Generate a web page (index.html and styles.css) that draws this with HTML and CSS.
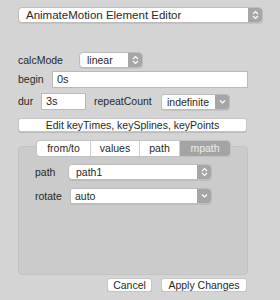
FILE: index.html
```html
<!DOCTYPE html>
<html>
<head>
    <meta charset="utf-8">
    <title>AnimateMotion Element Editor</title>
    <link rel="stylesheet" href="styles.css">
</head>
<body>
    <div class="editor">
        <div class="select select-top">
            <span class="select-text">AnimateMotion Element Editor</span>
            <span class="select-arrow"><svg width="7" height="10" viewBox="0 0 7 10"><path d="M1 4 L3.5 1.5 L6 4 M1 6 L3.5 8.5 L6 6" fill="none" stroke="#fff" stroke-width="1.2"/></svg></span>
        </div>

        <div class="row row-calc">
            <span class="label">calcMode</span>
            <div class="select select-calc">
                <span class="select-text">linear</span>
                <span class="select-arrow"><svg width="7" height="10" viewBox="0 0 7 10"><path d="M1 4 L3.5 1.5 L6 4 M1 6 L3.5 8.5 L6 6" fill="none" stroke="#fff" stroke-width="1.2"/></svg></span>
            </div>
        </div>

        <div class="row row-begin">
            <span class="label">begin</span>
            <div class="textbox textbox-begin">0s</div>
        </div>

        <div class="row row-dur">
            <span class="label">dur</span>
            <div class="textbox textbox-dur">3s</div>
            <span class="label label-repeat">repeatCount</span>
            <div class="select select-repeat">
                <span class="select-text">indefinite</span>
                <span class="select-arrow"><svg width="7" height="6" viewBox="0 0 7 6"><path d="M1 1.5 L3.5 4 L6 1.5" fill="none" stroke="#fff" stroke-width="1.2"/></svg></span>
            </div>
        </div>

        <div class="button button-wide">Edit keyTimes, keySplines, keyPoints</div>

        <div class="tabbox">
            <div class="tabs">
                <span class="tab tab-fromto">from/to</span>
                <span class="tab tab-values">values</span>
                <span class="tab tab-path">path</span>
                <span class="tab tab-mpath selected">mpath</span>
            </div>
            <div class="panel">
                <div class="row row-path">
                    <span class="label label-inner">path</span>
                    <div class="select select-path">
                        <span class="select-text">path1</span>
                        <span class="select-arrow"><svg width="7" height="10" viewBox="0 0 7 10"><path d="M1 4 L3.5 1.5 L6 4 M1 6 L3.5 8.5 L6 6" fill="none" stroke="#fff" stroke-width="1.2"/></svg></span>
                    </div>
                </div>
                <div class="row row-rotate">
                    <span class="label label-inner">rotate</span>
                    <div class="select select-rotate">
                        <span class="select-text select-text-square">auto</span>
                        <span class="select-arrow"><svg width="7" height="6" viewBox="0 0 7 6"><path d="M1 1.5 L3.5 4 L6 1.5" fill="none" stroke="#fff" stroke-width="1.2"/></svg></span>
                    </div>
                </div>
            </div>
        </div>

        <div class="footer">
            <div class="button button-cancel">Cancel</div>
            <div class="button button-apply">Apply Changes</div>
        </div>
    </div>
</body>
</html>
```

FILE: styles.css
```css
html, body {
	margin: 0;
	padding: 0;
	background: #d4d4d4;
}
body {
	font: normal 10.5px/1 "Liberation Sans", Arial, sans-serif;
	color: #282828;
}
.editor {
	width: 245px;
	padding: 7px 0 0 18px;
	display: flex;
	flex-direction: column;
}

/* selects */
.select {
	display: flex;
	height: 16px;
	box-sizing: border-box;
	border: 1px solid #bcbcbc;
	border-radius: 4px;
	background: #fff;
	box-shadow: 0 1px 0 rgba(0,0,0,0.08);
	overflow: hidden;
}
.select-text {
	flex: 1;
	padding-left: 7px;
	line-height: 14px;
	white-space: nowrap;
	overflow: hidden;
}
.select-arrow {
	width: 14px;
	background: #a6a6a6;
	display: flex;
	align-items: center;
	justify-content: center;
}
.select-top {
	width: 245px;
	font-size: 11.5px;
}
.select-calc {
	width: 64px;
}
.select-repeat {
	width: 69px;
	border-radius: 3px;
}
.select-repeat .select-text {
	padding-left: 5px;
}
.select-path {
	width: 144px;
}
.select-rotate {
	width: 142px;
	border-radius: 2px 4px 4px 2px;
}
.select-text-square {
	padding-left: 4px;
}

/* rows */
.row {
	display: flex;
	align-items: center;
}
.label {
	white-space: nowrap;
}
.row-calc {
	margin-top: 29px;
}
.row-calc .label {
	width: 61px;
}
.row-begin {
	margin-top: 3px;
}
.row-begin .label {
	width: 34px;
}
.row-dur {
	margin-top: 5px;
}
.row-dur .label {
	width: 23px;
}
.label-repeat {
	margin-left: 8px;
	width: 61px !important;
	margin-right: 6px;
}

/* text boxes */
.textbox {
	height: 17px;
	box-sizing: border-box;
	border: 1px solid #b9b9b9;
	background: #fff;
	line-height: 15px;
	padding-left: 4px;
	font-size: 11px;
}
.textbox-begin {
	width: 196px;
}
.textbox-dur {
	width: 45px;
}

/* buttons */
.button {
	height: 14px;
	box-sizing: border-box;
	border: 1px solid #c6c6c6;
	border-radius: 3px;
	background: #fff;
	box-shadow: 0 1px 0 rgba(0,0,0,0.12);
	text-align: center;
	line-height: 12px;
	white-space: nowrap;
}
.button-wide {
	width: 229px;
	margin-top: 8px;
}

/* tabs */
.tabbox {
	margin-top: 9px;
	position: relative;
	width: 230px;
}
.tabs {
	position: absolute;
	top: 0;
	left: 19px;
	display: flex;
	height: 15px;
	border-radius: 3px;
	box-shadow: 0 0 0 1px #c2c2c2, 0 1px 1px rgba(0,0,0,0.15);
	overflow: hidden;
	background: #fff;
	z-index: 1;
}
.tab {
	display: flex;
	align-items: center;
	justify-content: center;
	border-right: 1px solid #d0d0d0;
}
.tab-fromto {
	width: 53px;
}
.tab-values {
	width: 48px;
}
.tab-path {
	width: 39px;
}
.tab-mpath {
	width: 50px;
	border-right: none;
}
.tab.selected {
	background: #a4a4a4;
	color: #ececec;
}
.panel {
	margin-top: 5px;
	height: 129px;
	box-sizing: border-box;
	background: #cbcbcb;
	border: 1px solid #c3c3c3;
	border-radius: 4px;
	padding: 17px 0 0 16px;
}
.label-inner {
	width: 33px;
}
.row-rotate {
	margin-top: 8px;
}
.row-rotate .label-inner {
	width: 35px;
}

/* footer */
.footer {
	display: flex;
	margin-top: 3px;
	padding-left: 89px;
}
.button-cancel {
	width: 45px;
}
.button-apply {
	width: 86px;
	margin-left: 9px;
}
```
